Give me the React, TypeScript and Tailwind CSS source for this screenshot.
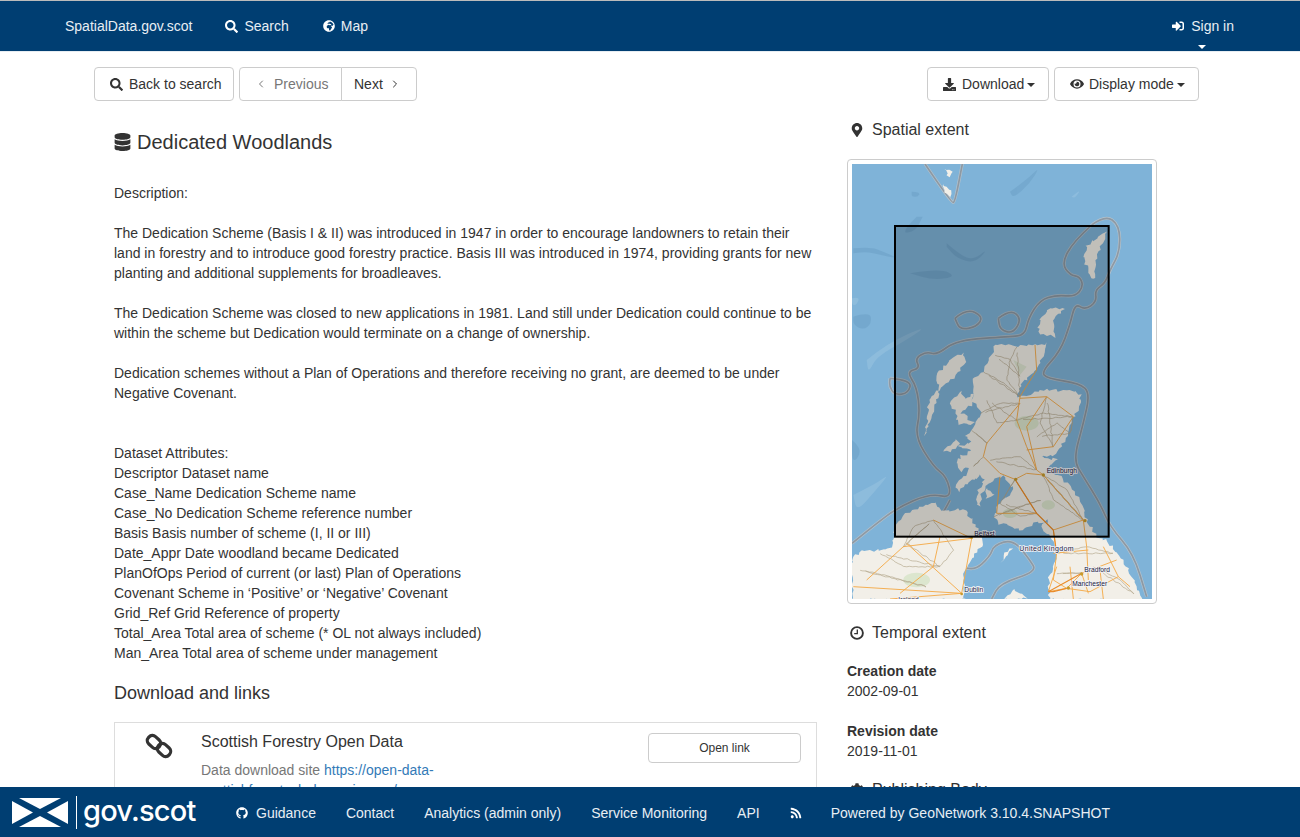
import { FaCog, FaDatabase, FaDownload, FaEye, FaGithub, FaGlobeAfrica, FaMapMarkerAlt, FaRss, FaSearch, FaSignInAlt } from "react-icons/fa";
import { ChevronLeft, ChevronRight } from "lucide-react";

const description = [
  "Description:",
  "",
  "The Dedication Scheme (Basis I & II) was introduced in 1947 in order to encourage landowners to retain their",
  "land in forestry and to introduce good forestry practice. Basis III was introduced in 1974, providing grants for new",
  "planting and additional supplements for broadleaves.",
  "",
  "The Dedication Scheme was closed to new applications in 1981. Land still under Dedication could continue to be",
  "within the scheme but Dedication would terminate on a change of ownership.",
  "",
  "Dedication schemes without a Plan of Operations and therefore receiving no grant, are deemed to be under",
  "Negative Covenant.",
  "",
  "",
  "Dataset Attributes:",
  "Descriptor Dataset name",
  "Case_Name Dedication Scheme name",
  "Case_No Dedication Scheme reference number",
  "Basis Basis number of scheme (I, II or III)",
  "Date_Appr Date woodland became Dedicated",
  "PlanOfOps Period of current (or last) Plan of Operations",
  "Covenant Scheme in ‘Positive’ or ‘Negative’ Covenant",
  "Grid_Ref Grid Reference of property",
  "Total_Area Total area of scheme (* OL not always included)",
  "Man_Area Total area of scheme under management",
];

type Pt = [number, number];

// map coordinates are 3x page pixels, origin at page (840, 380)
const parse = (s: string): Pt[] => s.trim().split(/\s+/).map((p) => p.split(",").map(Number) as Pt);

// jagged coastline: split each edge and nudge the points a bit
function rough(s: string, amp = 5) {
  const pts = parse(s);
  let seed = 7;
  const rnd = () => {
    seed = (seed * 16807) % 2147483647;
    return (seed % 1000) / 500 - 1;
  };
  const out: string[] = [];
  pts.forEach((p, i) => {
    const q = pts[(i + 1) % pts.length];
    const n = Math.max(1, Math.round(Math.hypot(q[0] - p[0], q[1] - p[1]) / 9));
    for (let k = 0; k < n; k++) {
      const x = p[0] + ((q[0] - p[0]) * k) / n + rnd() * amp;
      const y = p[1] + ((q[1] - p[1]) * k) / n + rnd() * amp;
      out.push(`${x.toFixed(1)},${y.toFixed(1)}`);
    }
  });
  return out.join(" ");
}

// smooth line through the midpoints
function smooth(s: string) {
  const pts = parse(s);
  let d = `M${pts[0][0]} ${pts[0][1]}`;
  for (let i = 1; i < pts.length - 1; i++) {
    const mx = (pts[i][0] + pts[i + 1][0]) / 2;
    const my = (pts[i][1] + pts[i + 1][1]) / 2;
    d += ` Q${pts[i][0]} ${pts[i][1]} ${mx} ${my}`;
  }
  const last = pts[pts.length - 1];
  return `${d} L${last[0]} ${last[1]}`;
}

const land = [
  "465,-108 530,-100 620,-110 618,-85 590,-35 545,10 532,50 570,42 610,30 700,32 722,45 718,80 695,125 680,165 660,205 640,225 600,228 650,240 620,268 660,290 700,330 730,380 740,420 770,470 800,480 850,540 880,600 905,660 630,660 625,600 650,540 640,480 600,440 625,420 580,430 540,450 480,430 462,410 480,370 520,330 490,290 460,300 440,315 425,340 422,378 408,370 415,330 435,300 420,285 395,300 350,325 375,285 385,265 362,272 350,238 395,212 355,200 395,185 372,168 395,150 420,100 395,60 400,0 430,-25 455,-75",
  "328,68 362,35 375,60 400,40 392,75 365,98 402,130 352,132 350,100",
  "308,212 350,180 358,195 330,216",
  "345,320 362,295 385,290 375,312 356,336",
  "405,290 420,272 412,300",
  "370,-85 375,-50 340,-5 300,22 268,62 255,165 280,92 296,45 293,-20 330,-60",
  "440,322 460,348 440,358 434,338",
  "630,-218 672,-210 640,-185 642,-130 595,-142 600,-185",
  "800,-448 790,-415 770,-375 760,-300 730,-365 740,-405 770,-425",
  "165,440 190,405 280,365 315,395 370,385 410,440 430,490 400,530 375,570 370,640 375,660 36,660 36,540 60,515 120,510 160,500",
  "518,503 500,525 484,550 492,520",
  "490,660 520,630 560,655",
  "312,-635 335,-625 326,-605",
  "308,-590 330,-565 333,-545 312,-560",
];

const boundaries = [
  "255,-648 335,-530 345,-535 367,-648",
  "755,-465 795,-495 838,-465 840,-385 810,-330 795,-290 765,-270 770,-235 735,-210 705,-230 690,-165 660,-85 605,-25 620,-5 720,10 750,40 730,130 700,240 730,290 780,370 810,440 880,520 920,650",
  "755,-465 700,-415 665,-350 690,-315 720,-310 730,-280 705,-250 650,-255 600,-240 565,-185 555,-135 510,-130 350,-120 290,-75 260,-85 225,-65 240,-35 200,-25 230,20 240,100 225,170 280,260 320,290 335,355 270,340 170,385 110,430 36,490",
  "330,360 300,420 230,485 260,510 340,545 400,575 450,530 462,495 520,478 570,540 590,575 480,610 455,657",
  "150,-5 215,0 205,40 165,45 148,20 150,-5",
  "345,-185 380,-215 430,-190 410,-160 360,-150 345,-185",
  "475,-185 510,-212 545,-185 520,-140 480,-150 475,-185",
];

const motorways = [
  "525,298 590,400 640,450 650,520 640,600 680,625",
  "525,298 560,280 610,285",
  "540,50 530,120 560,200 590,270 610,285",
  "540,70 440,190 430,230 480,280 525,298",
  "700,110 640,200 560,210",
  "700,110 620,50 540,55",
  "540,50 590,-30 585,-105",
  "610,285 730,420 740,500 745,600",
  "395,475 365,640",
  "395,475 280,420",
  "395,475 190,500",
  "365,640 200,490",
  "365,640 150,657",
  "365,640 40,620",
  "190,500 80,600",
  "725,580 680,625 625,635",
  "725,580 830,540",
  "680,625 750,635 835,590",
  "725,580 745,640",
  "640,450 730,420",
  "625,635 650,560",
  "640,520 745,510",
  "790,500 835,590 870,620",
  "480,290 470,400 590,400",
  "620,50 560,140 590,270",
  "300,470 280,560 180,640",
  "690,560 700,657",
  "780,570 790,657",
];

const roads = [
  "465,-75 510,-60 540,-10",
  "530,-100 510,-60 500,0 540,50",
  "430,-25 490,10 540,50",
  "420,100 480,70 540,70",
  "395,150 440,190",
  "620,50 600,130 640,200",
  "700,110 690,160",
  "530,120 610,100 700,110",
  "450,240 540,230 590,270",
  "430,230 400,260",
  "480,370 525,298",
  "480,370 540,410 590,400",
  "610,285 640,360 730,420",
  "610,285 680,330 730,420",
  "460,410 540,380 600,360",
  "280,420 220,440 190,500",
  "280,420 340,510 300,560 200,490",
  "120,520 190,560 300,560",
  "60,570 150,590 260,620",
  "650,520 740,500 820,520",
  "650,580 725,580",
  "760,560 840,600 880,640",
  "440,60 470,130 530,120",
  "590,170 650,130 690,160",
];

function ScotlandMap() {
  return (
    <svg viewBox="36 -648 900 1305" className="block h-[435px] w-[300px]">
      <rect x="36" y="-648" width="900" height="1305" fill="#7fb3d8" />
      <g fill="#6b9fc5" opacity="0.5">
        <path d={smooth("40,-395 90,-400 130,-385 175,-365 120,-375 80,-385 40,-380")} />
        <path d={smooth("320,-410 360,-375 400,-360 445,-395 405,-350 350,-365 320,-400")} />
        <path d={smooth("510,-565 560,-600 600,-640 570,-590 520,-545 510,-565")} />
        <path d={smooth("215,-565 240,-565 235,-550 215,-550 215,-565")} />
        <path d={smooth("230,-490 180,-440 225,-445 248,-490")} />
        <path d={smooth("40,-190 90,-205 95,-170 70,-150 40,-165 40,-190")} />
        <path d={smooth("210,-320 300,-335 350,-310 280,-300 210,-320")} />
        <path d={smooth("36,180 65,205 50,240 36,240 36,180")} />
      </g>
      <g fill="#93c0df" opacity="0.7">
        <path d={smooth("80,-60 140,-110 265,-165 200,-120 110,-70 85,-20 80,-60")} />
        <path d={smooth("40,345 110,310 150,280 100,340 50,395 40,345")} />
        <path d={smooth("36,-245 60,-250 50,-225 36,-225 36,-245")} />
        <path d={smooth("695,-550 725,-575 705,-545 695,-550")} />
      </g>
      {boundaries.map((p) => (
        <g key={p} fill="none">
          <path d={smooth(p)} stroke="#b4c2cc" strokeWidth="9" />
          <path d={smooth(p)} stroke="#8d99a4" strokeWidth="5" />
        </g>
      ))}
      {land.map((p) => (
        <polygon key={p} points={rough(p)} fill="#f2efe8" />
      ))}
      <g fill="#d5e4c6" opacity="0.75">
        <ellipse cx="560" cy="130" rx="36" ry="22" />
        <ellipse cx="625" cy="375" rx="20" ry="14" />
        <ellipse cx="510" cy="400" rx="22" ry="14" />
        <ellipse cx="230" cy="600" rx="40" ry="22" />
      </g>
      <polygon points="520,-60 560,-40 540,-15" fill="#dfe6d2" />
      {roads.map((p) => (
        <polyline key={p} points={rough(p, 2).split(" ").slice(0, -1).join(" ")} fill="none" stroke="#b3a78d" strokeWidth="2" />
      ))}
      {motorways.map((p) => (
        <polyline key={p} points={p} fill="none" stroke="#f4aa48" strokeWidth="2.8" />
      ))}
      <polyline points="525,298 590,400 640,450 650,520" fill="none" stroke="#ea8c2b" strokeWidth="3.4" />
      <polyline points="680,625 640,635 625,635 725,580" fill="none" stroke="#ea8c2b" strokeWidth="3.4" />
      <g fill="#c79a2c">
        <circle cx="527" cy="298" r="5" />
        <circle cx="610" cy="285" r="5" />
        <circle cx="735" cy="422" r="5" />
        <circle cx="725" cy="582" r="5" />
        <circle cx="685" cy="624" r="5" />
        <circle cx="365" cy="642" r="4" />
        <circle cx="395" cy="473" r="4" />
      </g>
      <g fill="#1b2140" stroke="#f3f3f7" strokeWidth="5" fontSize="20" className="[paint-order:stroke]">
        <text x="620" y="279">Edinburgh</text>
        <text x="403" y="468">Belfast</text>
        <text x="538" y="514" fontSize="21" letterSpacing="1">United Kingdom</text>
        <text x="373" y="637">Dublin</text>
        <text x="733" y="577">Bradford</text>
        <text x="697" y="619">Manchester</text>
        <text x="175" y="665">Ireland</text>
      </g>
      <rect x="165" y="-462" width="641" height="932" fill="#000000" fillOpacity="0.2" stroke="#000000" strokeWidth="6" />
    </svg>
  );
}

function Saltire() {
  return (
    <svg viewBox="0 0 56 29" className="h-[29px] w-[56px] shrink-0">
      <polygon points="7,0 49,0 28,11" fill="#ffffff" />
      <polygon points="7,29 49,29 28,18" fill="#ffffff" />
      <polygon points="0,3 0,26 21,14.5" fill="#ffffff" />
      <polygon points="56,3 56,26 35,14.5" fill="#ffffff" />
    </svg>
  );
}

function ChainIcon() {
  return (
    <svg viewBox="0 0 28 28" className="h-7 w-7" fill="none" stroke="#333333" strokeWidth="3.2">
      <rect x="2" y="5" width="14" height="10" rx="4.5" transform="rotate(42 9 10)" />
      <rect x="12" y="13" width="14" height="10" rx="4.5" transform="rotate(42 19 18)" />
    </svg>
  );
}

function ClockIcon() {
  return (
    <svg viewBox="0 0 14 14" className="h-[14px] w-[14px]" fill="none" stroke="#333333">
      <circle cx="7" cy="7" r="5.9" strokeWidth="1.9" />
      <path d="M7.3 3.4V7.6H4.2" strokeWidth="1.3" />
    </svg>
  );
}

function Caret() {
  return <span className="ml-[3px] inline-block h-0 w-0 align-middle border-x-4 border-t-4 border-x-transparent border-t-[#333]" />;
}

const btn = "flex h-[34px] items-center rounded border border-[#ccc] bg-white text-[#333]";

export default function App() {
  return (
    <div className="relative h-[837px] overflow-hidden bg-white text-sm leading-5 text-[#333] [font-family:'Liberation_Sans',sans-serif]">
      <header className="relative h-[52px] border-t border-b border-t-[#bbb] border-b-[#e7edf2] bg-[#003e72] text-[#e8eef4]">
        <div className="flex h-[50px] items-center pl-[65px] pr-[66px]">
          <span>SpatialData.gov.scot</span>
          <span className="ml-[33px] flex items-center gap-[6px]">
            <FaSearch className="h-[13px] w-[13px] text-white" />
            Search
          </span>
          <span className="ml-[34px] flex items-center gap-[6px]">
            <FaGlobeAfrica className="h-3 w-3 text-white" />
            Map
          </span>
          <span className="ml-auto flex items-center gap-[7px]">
            <FaSignInAlt className="h-3 w-3 text-white" />
            Sign in
          </span>
        </div>
        <span className="absolute left-[1198px] top-[44px] h-0 w-0 border-x-4 border-t-4 border-x-transparent border-t-white" />
      </header>

      <div className="ml-[94px] w-[1105px]">
        <div className="flex items-center justify-between pt-[15px]">
          <div className="flex gap-[5px]">
            <button className={`${btn} w-[140px] gap-[6px] pl-[15px]`}>
              <FaSearch className="h-[13px] w-[13px]" />
              Back to search
            </button>
            <div className="flex">
              <button className="flex h-[34px] w-[103px] items-center gap-[7px] rounded-l border border-[#ccc] bg-white pl-[15px] text-[#777]">
                <ChevronLeft className="h-3 w-3" strokeWidth={2} />
                Previous
              </button>
              <button className="-ml-px flex h-[34px] w-[76px] items-center gap-[6px] rounded-r border border-[#ccc] bg-white pl-3 text-[#333]">
                Next
                <ChevronRight className="h-3 w-3" strokeWidth={2} />
              </button>
            </div>
          </div>
          <div className="flex gap-[5px]">
            <button className={`${btn} w-[122px] gap-[6px] pl-[15px]`}>
              <FaDownload className="h-[13px] w-[13px]" />
              <span>
                Download
                <Caret />
              </span>
            </button>
            <button className={`${btn} w-[145px] gap-[5px] pl-[15px]`}>
              <FaEye className="h-[14px] w-[14px]" />
              <span>
                Display mode
                <Caret />
              </span>
            </button>
          </div>
        </div>

        <div className="flex">
          <main className="ml-5 w-[703px] shrink-0">
            <h1 className="mt-[30px] flex h-[22px] items-center gap-[6px] text-xl leading-[22px]">
              <FaDatabase className="h-[18px] w-[17px]" />
              Dedicated Woodlands
            </h1>
            <div className="mt-[30px]">
              {description.map((line, i) => (
                <p key={i} className="h-5 whitespace-nowrap">
                  {line}
                </p>
              ))}
            </div>
            <h2 className="mt-5 text-lg leading-5">Download and links</h2>
            <section className="mt-[19px] flex h-[200px] border border-[#ddd] pl-[86px]">
              <div className="relative w-[447px] pt-[10px]">
                <span className="absolute -left-[56px] top-[9px]">
                  <ChainIcon />
                </span>
                <h3 className="text-base leading-[18px]">Scottish Forestry Open Data</h3>
                <p className="mt-[9px] text-[#777]">
                  Data download site <a className="text-[#337ab7]">https://open-data-</a>
                  <br />
                  <a className="text-[#337ab7]">scottishforestry.hub.arcgis.com/</a>
                </p>
              </div>
              <button className="mt-[10px] h-[30px] w-[153px] rounded border border-[#ccc] bg-white text-xs text-[#333]">
                Open link
              </button>
            </section>
          </main>

          <aside className="ml-[30px] w-[310px] shrink-0">
            <h2 className="mt-5 flex h-[18px] items-center text-base leading-[18px]">
              <span className="flex w-[25px] justify-center pr-[5px]">
                <FaMapMarkerAlt className="h-[14px] w-[14px]" />
              </span>
              Spatial extent
            </h2>
            <div className="mt-5 h-[445px] w-[310px] rounded border border-[#ccc] p-1">
              <ScotlandMap />
            </div>
            <h2 className="mt-5 flex h-[18px] items-center text-base leading-[18px]">
              <span className="flex w-[25px] justify-center pr-[5px]">
                <ClockIcon />
              </span>
              Temporal extent
            </h2>
            <dl className="mt-[19px]">
              <dt className="font-bold">Creation date</dt>
              <dd>2002-09-01</dd>
              <dt className="mt-5 font-bold">Revision date</dt>
              <dd>2019-11-01</dd>
            </dl>
            <h2 className="mt-5 flex h-[18px] items-center text-base leading-[18px]">
              <span className="flex w-[25px] justify-center pr-[5px]">
                <FaCog className="h-[14px] w-[14px]" />
              </span>
              Publishing Body
            </h2>
          </aside>
        </div>
      </div>

      <footer className="fixed bottom-0 left-0 flex h-[50px] w-full items-center bg-[#003e72] text-[#e8eef4]">
        <div className="ml-3 flex items-center">
          <Saltire />
          <span className="ml-2 h-[33px] w-px bg-white" />
          <span className="ml-[6px] -mt-1 text-[29px] font-medium leading-none tracking-[-0.8px] text-white [font-family:Inter,sans-serif]">
            gov.scot
          </span>
        </div>
        <nav className="absolute left-[236px] top-[16px] flex items-center gap-[30px] whitespace-nowrap">
          <span className="flex items-center gap-2">
            <FaGithub className="h-3 w-3 text-white" />
            Guidance
          </span>
          <span>Contact</span>
          <span>Analytics (admin only)</span>
          <span>Service Monitoring</span>
          <span>API</span>
          <FaRss className="-mr-px h-3 w-3 text-white" />
          <span>Powered by GeoNetwork 3.10.4.SNAPSHOT</span>
        </nav>
      </footer>
    </div>
  );
}
